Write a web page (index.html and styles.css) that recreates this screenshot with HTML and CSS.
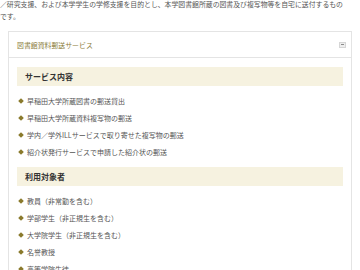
FILE: index.html
```html
<!DOCTYPE html>
<html lang="ja">
<head>
<meta charset="utf-8">
<link rel="stylesheet" href="styles.css">
</head>
<body>
<p class="intro">／研究支援、および本学学生の学修支援を目的とし、本学図書館所蔵の図書及び複写物等を自宅に送付するものです。</p>
<div class="panel">
  <div class="panel-head">
    <span class="panel-title">図書館資料郵送サービス</span>
    <span class="toggle"><span class="minus"></span></span>
  </div>
  <div class="panel-body">
    <h3 class="section-title">サービス内容</h3>
    <ul class="items">
      <li>早稲田大学所蔵図書の郵送貸出</li>
      <li>早稲田大学所蔵資料複写物の郵送</li>
      <li>学内／学外ILLサービスで取り寄せた複写物の郵送</li>
      <li>紹介状発行サービスで申請した紹介状の郵送</li>
    </ul>
    <h3 class="section-title">利用対象者</h3>
    <ul class="items">
      <li>教員（非常勤を含む）</li>
      <li>学部学生（非正規生を含む）</li>
      <li>大学院学生（非正規生を含む）</li>
      <li>名誉教授</li>
      <li>高等学院生徒</li>
    </ul>
  </div>
</div>
</body>
</html>
```
FILE: styles.css
```css
html, body {
  margin: 0;
  padding: 0;
  background: #ffffff;
  font-family: "Noto Sans CJK JP", "Noto Sans", sans-serif;
}
body {
  overflow: hidden;
}
.intro {
  margin: -2px 0 0 0;
  font-size: 6.86px;
  line-height: 12px;
  color: #555555;
  width: 346px;
}
.panel {
  margin: 9px 8px 0 8px;
  border: 1px solid #e4e4e4;
}
.panel-head {
  height: 25px;
  border-bottom: 1px solid #e4e4e4;
  display: flex;
  align-items: center;
  justify-content: space-between;
  padding: 0 5px 0 8px;
}
.panel-title {
  font-size: 6.9px;
  color: #8a7c3a;
}
.toggle {
  width: 5px;
  height: 4px;
  border: 1px solid #d6d6d6;
  background: #eeeeee;
  display: flex;
  align-items: center;
  justify-content: center;
}
.minus {
  width: 3px;
  height: 1px;
  background: #8c8c8c;
}
.panel-body {
  padding: 9px 8px 0 8px;
}
.section-title {
  margin: 0;
  height: 19px;
  background: #f6f2e0;
  padding-left: 8px;
  font-size: 8px;
  font-weight: 700;
  color: #333333;
  display: flex;
  align-items: center;
}
.items {
  list-style: none;
  margin: 0;
  padding: 6px 0 7px 2px;
}
.items li {
  height: 17px;
  display: flex;
  align-items: center;
  font-size: 7px;
  color: #555555;
}
.items li::before {
  content: "";
  width: 4px;
  height: 4px;
  background: #8a7a2c;
  transform: rotate(45deg);
  margin-right: 4px;
  flex-shrink: 0;
}
```
